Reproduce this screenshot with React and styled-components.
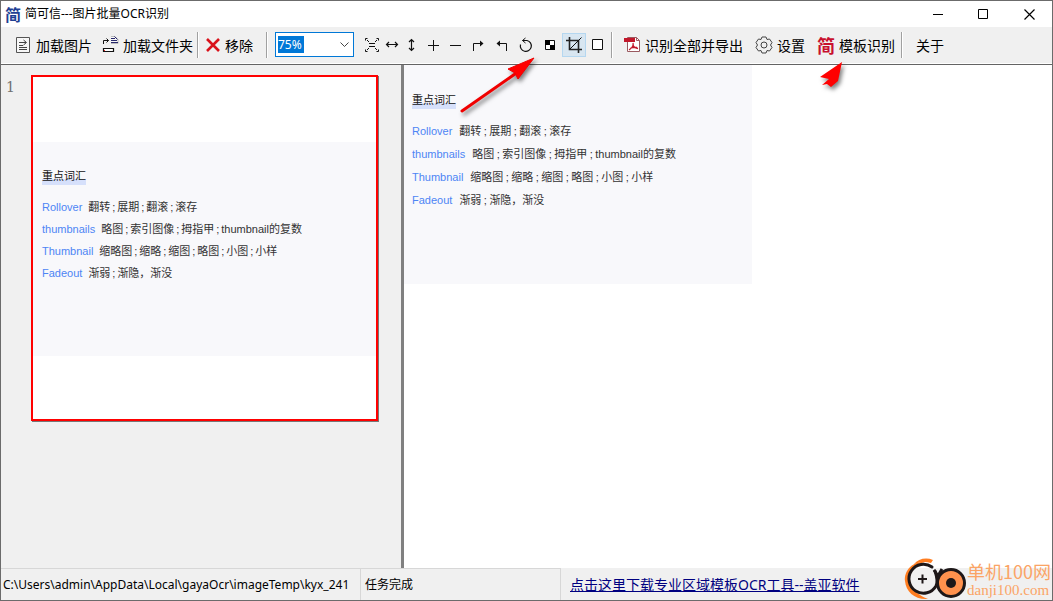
import React, { useState } from "react";
import styled, { createGlobalStyle } from "styled-components";

const words = [
    { term: "Rollover", parts: ["翻转", "展期", "翻滚", "滚存"] },
    { term: "thumbnails", parts: ["略图", "索引图像", "拇指甲", "thumbnail的复数"] },
    { term: "Thumbnail", parts: ["缩略图", "缩略", "缩图", "略图", "小图", "小样"] },
    { term: "Fadeout", parts: ["渐弱", "渐隐，渐没"] },
];

const Icon = ({ w = 16, h = 16, children, ...rest }) => (
    <svg width={w} height={h} viewBox={`0 0 ${w} ${h}`} fill="none" stroke="#111" aria-hidden="true" {...rest}>
        {children}
    </svg>
);

const ImageIcon = () => (
    <Icon>
        <path d="M.5 .5h13v15H.5z" stroke="#555" fill="#f7f7f7" />
        <path d="M3 5.500h7M7.500 3l3 2.500-3 2.500M3 8.500h4M3 10.500h8M3 12.500h8" stroke="#444" />
    </Icon>
);

const FolderIcon = () => (
    <Icon w={17} h={17}>
        <path d="M1.500 8V4.500h5M4.500 2.500l2 2-2 2" />
        <path d="M9 .5h4l3 3v4H9" stroke="#bbb" fill="#f7f7f7" />
        <path d="M9 2.500h4M9 4.500h6M9 6.500h7M12.500 .5l3 3" stroke="#27276b" />
        <path d="M1.500 12.500h10v3h-10z" fill="#fff" strokeWidth="1.200" />
        <path d="M2 14.500h1" stroke="#e22" />
    </Icon>
);

const RemoveIcon = () => (
    <Icon>
        <path d="M2 2l12 12M14 2L2 14" stroke="#d9121b" strokeWidth="2.600" />
    </Icon>
);

const FitIcon = () => (
    <Icon>
        <path d="M1.500 3.500v-2h2M12.500 1.500h2v2M14.500 12.500v2h-2M3.500 14.500h-2v-2M3 3l2 2M13 3l-2 2M3 13l2-2M13 13l-2-2M5 6.500h6M5 9.500h6" />
    </Icon>
);

const WidthIcon = () => (
    <Icon>
        <path d="M3 7.500h10M5 5L2.500 7.500 5 10M11 5l2.500 2.500L11 10" strokeWidth="1.200" />
    </Icon>
);

const HeightIcon = () => (
    <Icon>
        <path d="M7.500 2.500v11M5 5l2.500-2.500L10 5M5 11l2.500 2.500L10 11" strokeWidth="1.200" />
    </Icon>
);

const PlusIcon = () => (
    <Icon>
        <path d="M3 8.500h11M8.500 3v11" />
    </Icon>
);

const MinusIcon = () => (
    <Icon>
        <path d="M3 8.500h11" />
    </Icon>
);

const TurnRightIcon = () => (
    <Icon>
        <path d="M3.500 14V6.500h9" />
        <path d="M10 3.500l3.500 3L10 9.500z" fill="#111" stroke="none" />
    </Icon>
);

const TurnLeftIcon = () => (
    <Icon>
        <path d="M12.500 14V6.500h-9" />
        <path d="M6 3.500l-3.500 3 3.500 3z" fill="#111" stroke="none" />
    </Icon>
);

const RotateIcon = () => (
    <Icon>
        <path d="M4.500 3.500H9a5.500 5.500 0 1 1-6.500 4" strokeWidth="1.200" />
        <path d="M7.500 1L4.500 3.500l3 2.500" />
    </Icon>
);

const CheckerIcon = () => (
    <Icon>
        <path d="M3.500 3.500h9v9h-9z" fill="#fff" />
        <path d="M3 3h5v5H3zM8 8h5v5H8z" fill="#000" stroke="none" />
    </Icon>
);

const CropIcon = () => (
    <Icon>
        <path d="M3.500 0v12.500H16M0 3.500h12.500V16" stroke="#222" strokeWidth="1.600" />
        <path d="M4 12L15.500 .5" />
    </Icon>
);

const SquareIcon = () => (
    <Icon>
        <path d="M2.500 2.500h10v10h-10z" fill="#fff" />
    </Icon>
);

const PdfIcon = () => (
    <Icon w={17} h={17}>
        <path d="M3.500 1.500h9l3 3v11h-12z" fill="#fff" stroke="#9a5a60" />
        <path d="M12.500 1.500v3h3" stroke="#9a5a60" />
        <path d="M0 2h11v4H0z" fill="#c2182b" stroke="none" />
        <path d="M9 7c1 3-1 5-4 7M9 8c0 3 2 4 5 4.500M6 12.500c2-1 4-1.500 7-1" stroke="#c2182b" strokeWidth="1.300" />
    </Icon>
);

const GearIcon = () => (
    <Icon w={18} h={18} stroke="#444">
        <path d="M7 1h4l1 2.500 2.500-.5 2.500 3.500L15.500 9l1.500 2.500-2.500 3.500-2.500-.5L11 17H7l-1-2.500-2.500.5L1 11.500 2.500 9 1 6.500 3.500 3l2.500.5z" strokeLinejoin="round" />
        <circle cx="9" cy="9" r="3" />
    </Icon>
);

const viewTools = [
    { label: "适合窗口", size: 20, icon: FitIcon },
    { label: "适合宽度", size: 20, icon: WidthIcon },
    { label: "适合高度", size: 20, icon: HeightIcon },
    { label: "放大", size: 22, icon: PlusIcon },
    { label: "缩小", size: 22, icon: MinusIcon },
    { label: "向右旋转", size: 24, icon: TurnRightIcon },
    { label: "向左旋转", size: 24, icon: TurnLeftIcon },
    { label: "旋转", size: 24, icon: RotateIcon },
    { label: "二值化", size: 24, icon: CheckerIcon },
    { label: "裁剪", size: 24, icon: CropIcon },
    { label: "选区", size: 24, icon: SquareIcon },
];

const WordList = ({ compact }) => (
    <Words $compact={compact}>
        <h2>重点词汇</h2>
        {words.map((word) => (
            <p key={word.term}>
                <Term $compact={compact}>{word.term}</Term>
                {word.parts.map((part, i) => (
                    <React.Fragment key={i}>
                        {i > 0 && <Semi $compact={compact}>;</Semi>}
                        {part}
                    </React.Fragment>
                ))}
            </p>
        ))}
    </Words>
);

const App = () => {
    const [zoom, setZoom] = useState("75%");
    const [tool, setTool] = useState("裁剪");

    return (
        <Window>
            <GlobalStyle />
            <TitleBar>
                <Mark $color="#1f3f94" $size={16}>简</Mark>
                <h1>简可信---图片批量OCR识别</h1>
                <WindowButton aria-label="最小化">
                    <Icon w={11} h={11}><path d="M1 5.500h10" stroke="#000" /></Icon>
                </WindowButton>
                <WindowButton aria-label="最大化">
                    <Icon w={11} h={11}><path d="M.5 .5h9v9h-9z" stroke="#000" /></Icon>
                </WindowButton>
                <WindowButton aria-label="关闭">
                    <Icon w={11} h={11}><path d="M.5 .5l10 10M10.500 .5l-10 10" stroke="#000" strokeWidth="1.200" /></Icon>
                </WindowButton>
            </TitleBar>

            <ToolBar>
                <ToolButton><ImageIcon />加载图片</ToolButton>
                <ToolButton><FolderIcon />加载文件夹</ToolButton>
                <Divider $before={0} $after={0} />
                <ToolButton><RemoveIcon />移除</ToolButton>
                <Divider $before={9} $after={7} />
                <ZoomBox>
                    <ZoomSelect aria-label="缩放" value={zoom} onChange={(e) => setZoom(e.target.value)}>
                        <option>50%</option>
                        <option>75%</option>
                        <option>100%</option>
                        <option>150%</option>
                    </ZoomSelect>
                    <Icon w={9} h={6}><path d="M.5 .5l4 4 4-4" stroke="#444" /></Icon>
                </ZoomBox>
                {viewTools.map(({ label, size, icon: ToolIcon }) => (
                    <IconButton
                        key={label}
                        aria-label={label}
                        $size={size}
                        $active={tool === label}
                        onClick={() => setTool(label)}
                    >
                        <ToolIcon />
                    </IconButton>
                ))}
                <Divider $before={1} $after={5} />
                <ToolButton><PdfIcon />识别全部并导出</ToolButton>
                <ToolButton $apart><GearIcon />设置</ToolButton>
                <ToolButton $apart><Mark $color="#c8102e" $size={18}>简</Mark>模板识别</ToolButton>
                <Divider $before={2} $after={7} />
                <ToolButton>关于</ToolButton>
            </ToolBar>

            <Main>
                <ThumbPane>
                    <PageNumber>1</PageNumber>
                    <Thumb>
                        <ThumbImage><WordList compact /></ThumbImage>
                    </Thumb>
                </ThumbPane>
                <Preview>
                    <PreviewImage><WordList /></PreviewImage>
                </Preview>
            </Main>

            <StatusBar>
                <StatusPath>C:\Users\admin\AppData\Local\gayaOcr\imageTemp\kyx_241</StatusPath>
                <StatusText>任务完成</StatusText>
                <a href="#download">点击这里下载专业区域模板OCR工具--盖亚软件</a>
            </StatusBar>

            <Arrows width="400" height="70" viewBox="0 0 400 70" aria-hidden="true">
                <path d="M8 56L61 19" stroke="#f00000" strokeWidth="3" strokeLinecap="round" />
                <path d="M80 3L54 14l7 4 3 6z" fill="#f00" stroke="#e00" />
                <path d="M388 7l-22 15 9 2-7 6 5-1 4 3 7-6z" fill="#f00" />
            </Arrows>

            <Watermark>
                <svg width="64" height="44" viewBox="0 0 64 44" fill="none" aria-hidden="true">
                    <path d="M22 4C8 3 1 14 2 23c1 11 10 19 23 18-8-3-17-9-18-19C6 13 12 6 22 4z" fill="#ff7d20" />
                    <path d="M11 6c4-5 12-7 19-4l-2 3c-6-2-11-1-17 1z" fill="#ff7d20" />
                    <circle cx="48" cy="25" r="13.500" fill="#ff914d" stroke="#1d1718" strokeWidth="3" />
                    <circle cx="48" cy="25" r="5" fill="#1d1718" />
                    <path d="M29 9a14.500 14.500 0 1 0 4 19c2-4 1-9-1-15" stroke="#1d1718" strokeWidth="3" strokeLinecap="round" />
                    <path d="M31 12l4 6 4-7" stroke="#1d1718" strokeWidth="3" />
                    <path d="M15 21h9M19.500 16.500v9" stroke="#1d1718" strokeWidth="2" />
                </svg>
                <div>
                    <strong>单机100网</strong>
                    <span>danji100.com</span>
                </div>
            </Watermark>
        </Window>
    );
};

const GlobalStyle = createGlobalStyle`
  * {
    box-sizing: border-box;
  }
  body {
    margin: 0;
    font-family: "Noto Sans", "Noto Sans CJK SC", sans-serif;
    font-size: 12px;
    color: #000;
  }
  button, select {
    font: inherit;
    color: inherit;
    border: none;
    background: none;
    padding: 0;
  }
  h1, h2, p {
    margin: 0;
    font-size: inherit;
    font-weight: normal;
  }
`;

const Window = styled.div`
  position: relative;
  display: flex;
  flex-direction: column;
  height: 100vh;
  border: 1px solid #6b6b6b;
  background: #f0f0f0;
  overflow: hidden;
  white-space: nowrap;
`;

const TitleBar = styled.header`
  display: flex;
  align-items: center;
  height: 26px;
  padding-left: 4px;
  background: #fff;
  h1 {
    flex: 1;
    margin-left: 4px;
    line-height: 18px;
  }
`;

const Mark = styled.span`
  width: ${(p) => p.$size}px;
  font-size: ${(p) => p.$size}px;
  line-height: 18px;
  font-family: "Noto Sans CJK SC", sans-serif;
  font-weight: bold;
  color: ${(p) => p.$color};
`;

const WindowButton = styled.button`
  display: flex;
  align-items: center;
  justify-content: center;
  width: 46px;
  height: 24px;
`;

const ToolBar = styled.nav`
  display: flex;
  align-items: center;
  height: 38px;
  padding: 0 0 2px 9px;
  border-bottom: 1px solid #646464;
  box-shadow: inset 0 -1px #fff;
  flex-shrink: 0;
`;

const ToolButton = styled.button`
  display: flex;
  align-items: center;
  gap: 4px;
  height: 26px;
  padding: 0 4px 0 5px;
  margin-left: ${(p) => (p.$apart ? 3 : 1)}px;
  font-family: "Noto Sans CJK SC", sans-serif;
  font-size: 14px;
`;

const Divider = styled.span`
  width: 2px;
  height: 26px;
  margin-left: ${(p) => p.$before}px;
  margin-right: ${(p) => p.$after}px;
  border-left: 1px solid #a0a0a0;
  border-right: 1px solid #fff;
`;

const ZoomBox = styled.div`
  position: relative;
  margin-right: 8px;
  svg {
    position: absolute;
    right: 5px;
    top: 10px;
    pointer-events: none;
  }
`;

const ZoomSelect = styled.select`
  appearance: none;
  display: block;
  width: 79px;
  height: 25px;
  padding-left: 2px;
  border: 1px solid #0078d7;
  color: #fff;
  background: linear-gradient(#0078d7, #0078d7) 2px 3px / 26px 17px no-repeat #fff;
  option {
    color: #000;
  }
`;

const IconButton = styled.button`
  display: flex;
  align-items: center;
  justify-content: center;
  width: ${(p) => p.$size}px;
  height: 24px;
  border: 1px solid ${(p) => (p.$active ? "#b5d7f0" : "transparent")};
  background: ${(p) => (p.$active ? "#d8e6f1" : "transparent")};
  svg {
    flex-shrink: 0;
  }
`;

const Main = styled.main`
  display: flex;
  flex: 1;
  min-height: 0;
`;

const ThumbPane = styled.aside`
  display: flex;
  align-items: flex-start;
  width: 403px;
  padding: 10px 0 0 5px;
  border-right: 3px solid #808080;
`;

const PageNumber = styled.span`
  width: 25px;
  font-family: "DejaVu Serif", serif;
  font-size: 14px;
  line-height: 24px;
  color: #707070;
`;

const Thumb = styled.div`
  width: 347px;
  padding: 65px 0 63px;
  border: 2px solid #f00;
  background: #fff;
  box-shadow: 1px 1px #777;
`;

const ThumbImage = styled.div`
  height: 214px;
  padding: 26px 9px;
  background: #f8f8fb;
`;

const Preview = styled.section`
  flex: 1;
  background: #fff;
`;

const PreviewImage = styled.div`
  width: 348px;
  height: 219px;
  padding: 27px 8px;
  background: #f8f8fb;
`;

const Words = styled.article`
  font-family: "Liberation Sans", "Noto Sans CJK SC", sans-serif;
  font-size: 11px;
  line-height: ${(p) => (p.$compact ? 22 : 23)}px;
  color: #333;
  h2 {
    display: table;
    margin-bottom: 11px;
    padding-bottom: 1px;
    line-height: 16px;
    color: #111;
    background: linear-gradient(transparent 11px, #d6e0fb 11px);
  }
`;

const Term = styled.span`
  margin-right: ${(p) => (p.$compact ? 6 : 7)}px;
  color: #4d85f5;
`;

const Semi = styled.span`
  display: inline-block;
  width: ${(p) => (p.$compact ? 7 : 8)}px;
  text-align: center;
`;

const StatusBar = styled.footer`
  display: flex;
  align-items: center;
  height: 32px;
  flex-shrink: 0;
  a {
    margin-left: 9px;
    font-size: 14px;
    color: #000080;
  }
`;

const StatusPath = styled.span`
  width: 360px;
  height: 32px;
  padding-left: 2px;
  border-top: 1px solid #d7d7d7;
  border-right: 1px solid #d7d7d7;
  line-height: 32px;
  overflow: hidden;
`;

const StatusText = styled.span`
  width: 200px;
  height: 32px;
  padding-left: 4px;
  border-top: 1px solid #d7d7d7;
  border-right: 1px solid #d7d7d7;
  line-height: 32px;
`;

const Arrows = styled.svg`
  position: absolute;
  left: 453px;
  top: 54px;
  fill: none;
  pointer-events: none;
  filter: drop-shadow(2px 3px 2px rgba(0, 0, 0, 0.5));
`;

const Watermark = styled.div`
  position: absolute;
  right: 1px;
  bottom: -2px;
  display: flex;
  align-items: center;
  font-family: "Noto Sans CJK SC", sans-serif;
  color: #fba466;
  strong, span {
    display: block;
  }
  strong {
    font-size: 18px;
    font-weight: normal;
    line-height: 20px;
  }
  span {
    font-family: "Liberation Serif", serif;
    font-size: 15px;
    line-height: 18px;
  }
`;

export default App;
